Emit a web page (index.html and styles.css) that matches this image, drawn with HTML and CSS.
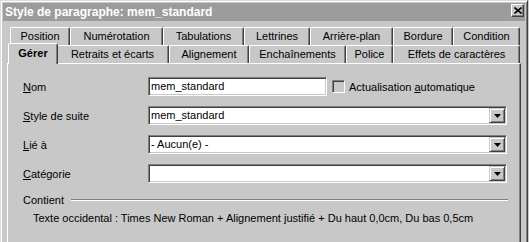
FILE: index.html
```html
<!DOCTYPE html>
<html lang="fr">
<head>
    <meta charset="UTF-8">
    <title>Style de paragraphe: mem_standard</title>
    <link rel="stylesheet" href="styles.css">
</head>
<body>
    <div class="window">
        <div class="titlebar">
            <span class="title">Style de paragraphe: mem_standard</span>
            <span class="close">
                <svg width="8" height="7" viewBox="0 0 8 7"><path d="M0.5 0.5 L7.5 6.5 M7.5 0.5 L0.5 6.5" stroke="#000" stroke-width="1.6" fill="none"/></svg>
            </span>
        </div>

        <div class="tabctl">
            <div class="tab-row back">
                <div class="tab">Position</div>
                <div class="tab">Numérotation</div>
                <div class="tab">Tabulations</div>
                <div class="tab">Lettrines</div>
                <div class="tab">Arrière-plan</div>
                <div class="tab">Bordure</div>
                <div class="tab">Condition</div>
            </div>
            <div class="tab-row front">
                <div class="tab active">Gérer</div>
                <div class="tab">Retraits et écarts</div>
                <div class="tab">Alignement</div>
                <div class="tab">Enchaînements</div>
                <div class="tab">Police</div>
                <div class="tab">Effets de caractères</div>
            </div>

            <div class="panel">
                <div class="field">
                    <span class="label"><u>N</u>om</span>
                    <div class="input name">mem_standard</div>
                    <div class="check"><span class="box"></span><span>Actualisation <u>a</u>utomatique</span></div>
                </div>
                <div class="field">
                    <span class="label"><u>S</u>tyle de suite</span>
                    <div class="input combo"><span class="value">mem_standard</span><span class="drop"><svg width="7" height="4" viewBox="0 0 7 4"><polygon points="0,0 7,0 3.5,4" fill="#000"/></svg></span></div>
                </div>
                <div class="field">
                    <span class="label"><u>L</u>ié à</span>
                    <div class="input combo"><span class="value">- Aucun(e) -</span><span class="drop"><svg width="7" height="4" viewBox="0 0 7 4"><polygon points="0,0 7,0 3.5,4" fill="#000"/></svg></span></div>
                </div>
                <div class="field">
                    <span class="label"><u>C</u>atégorie</span>
                    <div class="input combo"><span class="value"></span><span class="drop"><svg width="7" height="4" viewBox="0 0 7 4"><polygon points="0,0 7,0 3.5,4" fill="#000"/></svg></span></div>
                </div>

                <div class="group">
                    <span>Contient</span>
                    <span class="rule"></span>
                </div>
                <p class="summary">Texte occidental : Times New Roman + Alignement justifié + Du haut 0,0cm, Du bas 0,5cm</p>
            </div>
        </div>
    </div>
</body>
</html>
```

FILE: styles.css
```css
body {
    margin: 0;
    background: #c8c8c8;
    font-family: "Liberation Sans", Arial, sans-serif;
    font-size: 11px;
    color: #000;
    overflow: hidden;
}
.window {
    width: 528px;
    height: 242px;
    box-sizing: border-box;
    border: 1px solid;
    border-bottom: 0;
    border-color: #dcdcdc #404040 #404040 #dcdcdc;
    box-shadow: inset 1px 1px #fff, inset -1px 0 #808080;
    padding: 2px 2px 0 2px;
    overflow: hidden;
}
.titlebar {
    height: 18px;
    background: #9c9c9c;
    display: flex;
    justify-content: space-between;
    padding: 0 1px 0 2px;
}
.title {
    color: #fff;
    font-size: 12px;
    font-weight: bold;
    line-height: 18px;
}
.close {
    margin-top: 1px;
    width: 13px;
    height: 13px;
    box-sizing: border-box;
    background: #c8c8c8;
    border: 1px solid;
    border-color: #fff #404040 #404040 #fff;
    box-shadow: inset -1px -1px #808080;
    display: flex;
    align-items: center;
    justify-content: center;
}
.tabctl {
    margin: 6px 0 0 4px;
    width: 514px;
}
.tab-row {
    display: flex;
    height: 18px;
    padding-left: 3px;
}
.tab {
    position: relative;
    box-sizing: border-box;
    height: 18px;
    background: #c8c8c8;
    border-left: 1px solid #fff;
    border-top: 1px solid #fff;
    border-right: 1px solid #404040;
    border-radius: 2px 2px 0 0;
    box-shadow: inset -1px 0 #808080;
    text-align: center;
    line-height: 16px;
    white-space: nowrap;
}
.back .tab:nth-child(1) { width: 60px; }
.back .tab:nth-child(2) { width: 93px; }
.back .tab:nth-child(3) { width: 81px; }
.back .tab:nth-child(4) { width: 66px; }
.back .tab:nth-child(5) { width: 83px; }
.back .tab:nth-child(6) { width: 60px; }
.back .tab:nth-child(7) { width: 67px; }
.front .tab:nth-child(1) { width: 46px; }
.front .tab:nth-child(2) { width: 113px; }
.front .tab:nth-child(3) { width: 80px; }
.front .tab:nth-child(4) { width: 97px; }
.front .tab:nth-child(5) { width: 47px; }
.front .tab:nth-child(6) { width: 127px; }
.front .tab.active {
    z-index: 2;
    width: 50px;
    height: 21px;
    margin: -2px -2px 0 -2px;
    font-weight: bold;
    line-height: 18px;
}
.panel {
    height: 179px;
    box-sizing: border-box;
    border-left: 1px solid #fff;
    border-top: 1px solid #fff;
    border-right: 1px solid #404040;
    box-shadow: inset -1px 0 #808080;
    padding: 13px 0 0 15px;
}
.field {
    display: flex;
    align-items: center;
    height: 19px;
    margin-bottom: 10px;
}
.label {
    width: 125px;
}
.input {
    box-sizing: border-box;
    height: 19px;
    background: #fff;
    border: 1px solid;
    border-color: #808080 #fff #fff #808080;
    box-shadow: inset 1px 1px #404040, inset -1px -1px #c8c8c8;
    padding: 0 2px;
    line-height: 17px;
}
.name {
    width: 179px;
}
.combo {
    width: 359px;
    display: flex;
    justify-content: space-between;
    padding-right: 1px;
}
.drop {
    margin-top: 1px;
    width: 16px;
    height: 15px;
    box-sizing: border-box;
    background: #c8c8c8;
    border: 1px solid;
    border-color: #c8c8c8 #404040 #404040 #c8c8c8;
    box-shadow: inset 1px 1px #fff, inset -1px -1px #808080;
    display: flex;
    align-items: center;
    justify-content: center;
}
.check {
    display: flex;
    align-items: center;
    margin-left: 5px;
}
.box {
    width: 13px;
    height: 13px;
    box-sizing: border-box;
    margin-right: 4px;
    border: 1px solid;
    border-color: #808080 #fff #fff #808080;
    box-shadow: inset 1px 1px #404040, inset -1px -1px #c8c8c8;
}
.field:last-of-type {
    margin-bottom: 0;
}
.group {
    display: flex;
    align-items: center;
    height: 13px;
    margin-top: 9px;
}
.rule {
    flex: 1;
    margin: 0 12px 0 7px;
    border-top: 1px solid #808080;
    border-bottom: 1px solid #fff;
}
.summary {
    margin: 6px 0 0 10px;
    line-height: 13px;
}
```
